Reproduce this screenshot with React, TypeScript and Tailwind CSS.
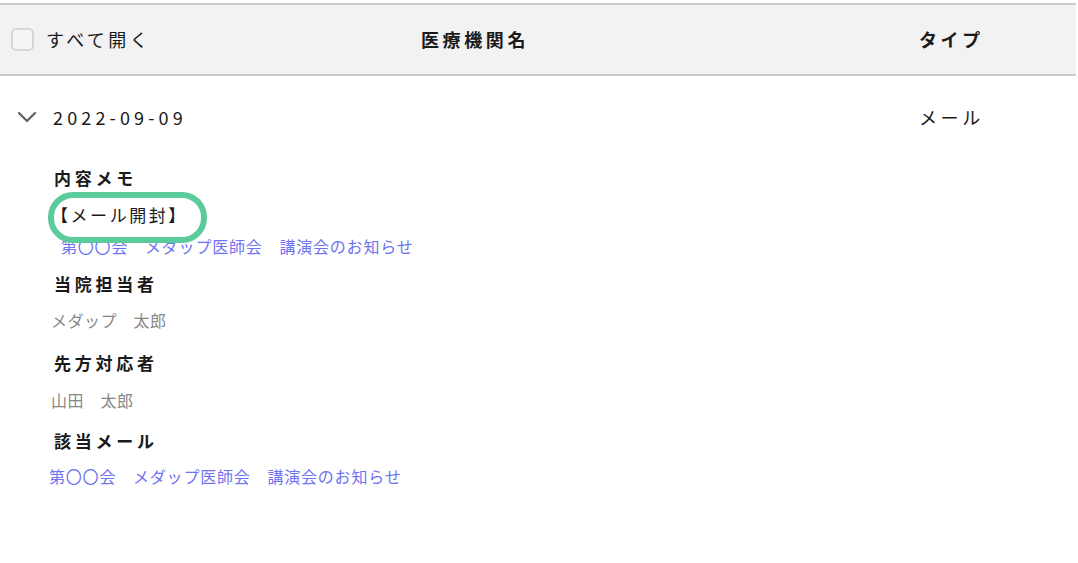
import { ChevronDown } from "lucide-react";

const font = { fontFamily: '"Noto Sans CJK JP", "Noto Sans", sans-serif' };

function Label({ children, className = "" }: { children: React.ReactNode; className?: string }) {
  return (
    <div className={`ml-[4px] text-[17px] font-bold leading-[26px] tracking-[0.22em] text-[#1a1a1a] ${className}`}>
      {children}
    </div>
  );
}

function MailLink({ className = "" }: { className?: string }) {
  return (
    <div className={`text-[16px] leading-[26px] tracking-[0.05em] text-[#6f73f0] ${className}`}>
      第〇〇会　メダップ医師会　講演会のお知らせ
    </div>
  );
}

export default function App() {
  return (
    <div className="min-h-[563px] w-[1078px] bg-white pt-[3px]" style={font}>
      {/* table header */}
      <div className="mr-[2px] flex h-[73px] items-center border-y-2 border-[#cacccc] bg-[#f2f2f2]">
        <div className="flex w-[421px] items-center">
          <span className="ml-[11px] h-[23px] w-[23px] rounded-[5px] border-2 border-[#d6d6d6] bg-[#f5f5f5]" />
          <span className="ml-[12px] text-[18px] tracking-[0.19em] text-[#1a1a1a]">すべて開く</span>
        </div>
        <div className="w-[498px] text-[18px] font-bold tracking-[0.2em] text-[#1a1a1a]">医療機関名</div>
        <div className="text-[18px] font-bold tracking-[0.2em] text-[#1a1a1a]">タイプ</div>
      </div>

      {/* expanded row */}
      <div className="flex h-[82px] items-center">
        <div className="flex w-[919px] items-center">
          <ChevronDown className="ml-[11px] h-[32px] w-[32px] text-[#666]" strokeWidth={1.8} />
          <span className="ml-[10px] text-[18px] tracking-[0.23em] text-[#1a1a1a]">2022-09-09</span>
        </div>
        <div className="text-[18px] tracking-[0.2em] text-[#1a1a1a]">メール</div>
      </div>

      <div className="pl-[50px]">
        <Label className="mt-[7px]">内容メモ</Label>
        <div className="relative mt-[11px] inline-block">
          <div className="pl-[1px] text-[17px] leading-[26px] tracking-[0.15em] text-[#1a1a1a]">【メール開封】</div>
          <span className="pointer-events-none absolute left-[-2px] top-[-10px] h-[51px] w-[159px] rounded-[25px] border-[6px] border-[#5ccb9b]" />
        </div>
        <MailLink className="mt-[5px] ml-[11px]" />

        <Label className="mt-[12px]">当院担当者</Label>
        <div className="mt-[10px] ml-[1px] text-[16px] leading-[26px] tracking-[0.03em] text-[#888]">メダップ　太郎</div>

        <Label className="mt-[17px]">先方対応者</Label>
        <div className="mt-[11px] ml-[1px] text-[16px] leading-[26px] tracking-[0.03em] text-[#888]">山田　太郎</div>

        <Label className="mt-[15px]">該当メール</Label>
        <MailLink className="mt-[9px] ml-[-1px]" />
      </div>
    </div>
  );
}
